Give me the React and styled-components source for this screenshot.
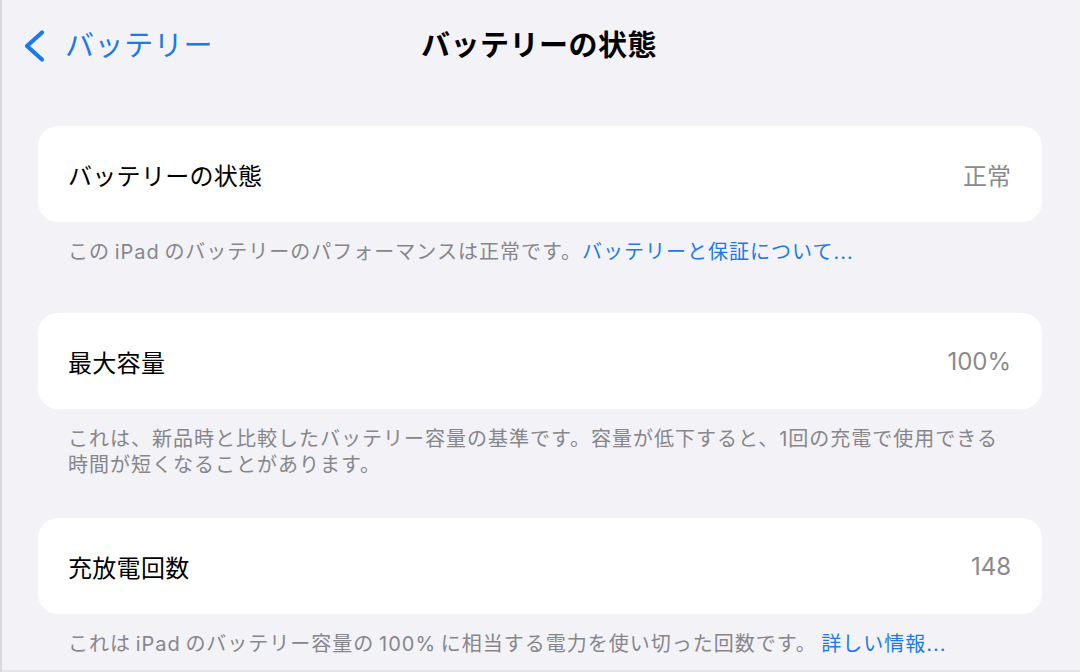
import React from "react";
import styled, { createGlobalStyle } from "styled-components";

const GlobalStyle = createGlobalStyle`
  html, body {
    margin: 0;
    padding: 0;
    background: #f2f2f7;
  }
  body {
    font-family: Inter, "Noto Sans CJK JP", "Noto Sans", sans-serif;
    -webkit-font-smoothing: antialiased;
  }
`;

const BLUE = "#1b7ae6";

// 画面全体 (左端・下端の細い枠線は影で描く)
const Screen = styled.div`
  width: 1080px;
  height: 672px;
  background: #f2f2f7;
  box-shadow: inset 2px 0 0 #dadade, inset 0 -2px 0 #e6e6ea;
  overflow: hidden;
`;

// ナビゲーションバー
const NavBar = styled.div`
  height: 92px;
  display: grid;
  grid-template-columns: 1fr auto 1fr;
  align-items: center;
`;

const BackButton = styled.div`
  display: flex;
  align-items: center;
  gap: 18px;
  padding-left: 21px;
  color: ${BLUE};
  font-size: 29px;
  line-height: 36px;
  letter-spacing: 0.6px;
`;

const Title = styled.div`
  font-size: 29px;
  font-weight: 700;
  line-height: 36px;
  color: #000;
  letter-spacing: 0.5px;
  margin-left: -2px;
`;

const Content = styled.div`
  padding: 0 38px;
`;

const Section = styled.div`
  margin-top: ${(p) => p.$gap}px;
`;

const Card = styled.div`
  height: 96px;
  background: #fff;
  border-radius: 20px;
  display: flex;
  align-items: center;
  justify-content: space-between;
  padding: 0 31px 0 30px;
`;

const Label = styled.span`
  font-size: 24px;
  color: #000;
  letter-spacing: 0.3px;
`;

const Value = styled.span`
  font-size: 24px;
  color: #8a8a8e;
`;

const Footer = styled.p`
  margin: 0;
  padding: 17px 30px 0;
  font-size: 20px;
  line-height: 26px;
  letter-spacing: 1px;
  color: #86868b;
`;

const Link = styled.span`
  color: ${BLUE};
`;

const Chevron = () => (
  <svg width="26" height="36" viewBox="0 0 26 36">
    <path
      d="M21 4.5 L6 18 L21 31.5"
      fill="none"
      stroke={BLUE}
      strokeWidth="4.2"
      strokeLinecap="round"
      strokeLinejoin="round"
    />
  </svg>
);

const App = () => {
  return (
    <Screen>
      <GlobalStyle />
      <NavBar>
        <BackButton>
          <Chevron />
          バッテリー
        </BackButton>
        <Title>バッテリーの状態</Title>
        <div />
      </NavBar>

      <Content>
        <Section $gap={34}>
          <Card>
            <Label>バッテリーの状態</Label>
            <Value>正常</Value>
          </Card>
          <Footer>
            この{"\u2009"}iPad{"\u2009"}のバッテリーのパフォーマンスは正常です。
            <Link>バッテリーと保証について...</Link>
          </Footer>
        </Section>

        <Section $gap={48}>
          <Card>
            <Label>最大容量</Label>
            <Value>100%</Value>
          </Card>
          <Footer>
            これは、新品時と比較したバッテリー容量の基準です。容量が低下すると、1回の充電で使用できる
            <br />
            時間が短くなることがあります。
          </Footer>
        </Section>

        <Section $gap={40}>
          <Card>
            <Label>充放電回数</Label>
            <Value>148</Value>
          </Card>
          <Footer>
            これは{"\u2009"}iPad{"\u2009"}のバッテリー容量の{"\u2009"}100%{"\u2009"}に相当する電力を使い切った回数です。{"\u2009"}
            <Link>詳しい情報...</Link>
          </Footer>
        </Section>
      </Content>
    </Screen>
  );
};

export default App;
